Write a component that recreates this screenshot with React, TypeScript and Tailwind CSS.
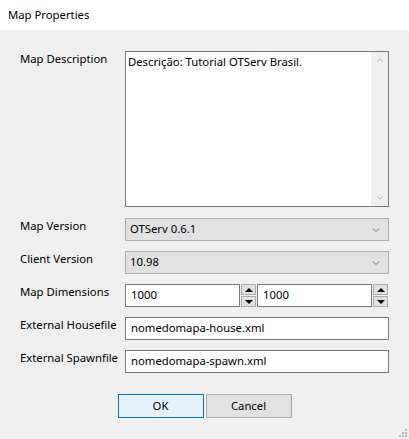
import { ChevronDown, ChevronUp } from 'lucide-react'

const font = { fontFamily: '"Segoe UI", "Noto Sans", "Open Sans", sans-serif' }

function Label({ text }: { text: string }) {
  return <div className="w-[105px] shrink-0 leading-[15px]">{text}</div>
}

function Select({ value }: { value: string }) {
  return (
    <div className="flex-1 h-[23px] bg-[#e1e1e1] border border-[#adadad] flex items-center justify-between pl-[4px] pr-[6px]">
      <span>{value}</span>
      <ChevronDown className="w-[12px] h-[12px] text-[#404040]" strokeWidth={1.3} />
    </div>
  )
}

function TextBox({ value, className = '' }: { value: string; className?: string }) {
  return (
    <div className={`h-[23px] bg-white border border-[#7a7a7a] flex items-center pl-[5px] ${className}`}>
      {value}
    </div>
  )
}

function Spinner() {
  return (
    <div className="flex flex-col gap-[1px] w-[15px] h-[23px]">
      <div className="flex-1 bg-[#e1e1e1] border border-[#adadad] flex items-center justify-center">
        <div className="w-0 h-0 border-l-[4px] border-r-[4px] border-b-[4px] border-l-transparent border-r-transparent border-b-black" />
      </div>
      <div className="flex-1 bg-[#e1e1e1] border border-[#adadad] flex items-center justify-center">
        <div className="w-0 h-0 border-l-[4px] border-r-[4px] border-t-[4px] border-l-transparent border-r-transparent border-t-black" />
      </div>
    </div>
  )
}

export default function App() {
  return (
    <div className="w-[409px] h-[439px] bg-[#f0f0f0] text-[11.3px] text-black flex flex-col relative" style={font}>
      <div className="h-[30px] bg-white flex items-center pl-[8px]">Map Properties</div>

      <div className="flex flex-col pl-[20px] pr-[20px] pt-[21px]">
        <div className="flex">
          <Label text="Map Description" />
          <div className="flex-1 h-[156px] bg-white border border-[#7a7a7a] flex">
            <div className="flex-1 px-[2px] pt-[2px] leading-[16px]">Descrição: Tutorial OTServ Brasil.</div>
            <div className="w-[17px] bg-[#f0f0f0] flex flex-col justify-between items-center py-[3px]">
              <ChevronUp className="w-[10px] h-[10px] text-[#a3a3a3]" strokeWidth={2} />
              <ChevronDown className="w-[10px] h-[10px] text-[#a3a3a3]" strokeWidth={2} />
            </div>
          </div>
        </div>

        <div className="flex mt-[11px]">
          <Label text="Map Version" />
          <Select value="OTServ 0.6.1" />
        </div>

        <div className="flex mt-[10px]">
          <Label text="Client Version" />
          <Select value="10.98" />
        </div>

        <div className="flex mt-[10px]">
          <Label text="Map Dimensions" />
          <div className="flex-1 flex">
            <TextBox value="1000" className="w-[115px]" />
            <div className="ml-[1px]">
              <Spinner />
            </div>
            <TextBox value="1000" className="w-[115px] ml-[1px]" />
            <div className="ml-[1px]">
              <Spinner />
            </div>
          </div>
        </div>

        <div className="flex mt-[10px]">
          <Label text="External Housefile" />
          <TextBox value="nomedomapa-house.xml" className="flex-1" />
        </div>

        <div className="flex mt-[10px]">
          <Label text="External Spawnfile" />
          <TextBox value="nomedomapa-spawn.xml" className="flex-1" />
        </div>

        <div className="flex justify-center gap-[2px] mt-[21px]">
          <div className="w-[86px] h-[24px] bg-[#e5f1fb] border border-[#0078d7] flex items-center justify-center">OK</div>
          <div className="w-[86px] h-[24px] bg-[#e1e1e1] border border-[#adadad] flex items-center justify-center">Cancel</div>
        </div>
      </div>

      <div className="absolute right-[2px] bottom-[2px] grid grid-cols-3 gap-[1px] w-[8px] h-[8px]">
        <span />
        <span />
        <span className="w-[2px] h-[2px] bg-[#bcbcbc]" />
        <span />
        <span className="w-[2px] h-[2px] bg-[#bcbcbc]" />
        <span className="w-[2px] h-[2px] bg-[#bcbcbc]" />
        <span className="w-[2px] h-[2px] bg-[#bcbcbc]" />
        <span className="w-[2px] h-[2px] bg-[#bcbcbc]" />
        <span className="w-[2px] h-[2px] bg-[#bcbcbc]" />
      </div>
    </div>
  )
}
